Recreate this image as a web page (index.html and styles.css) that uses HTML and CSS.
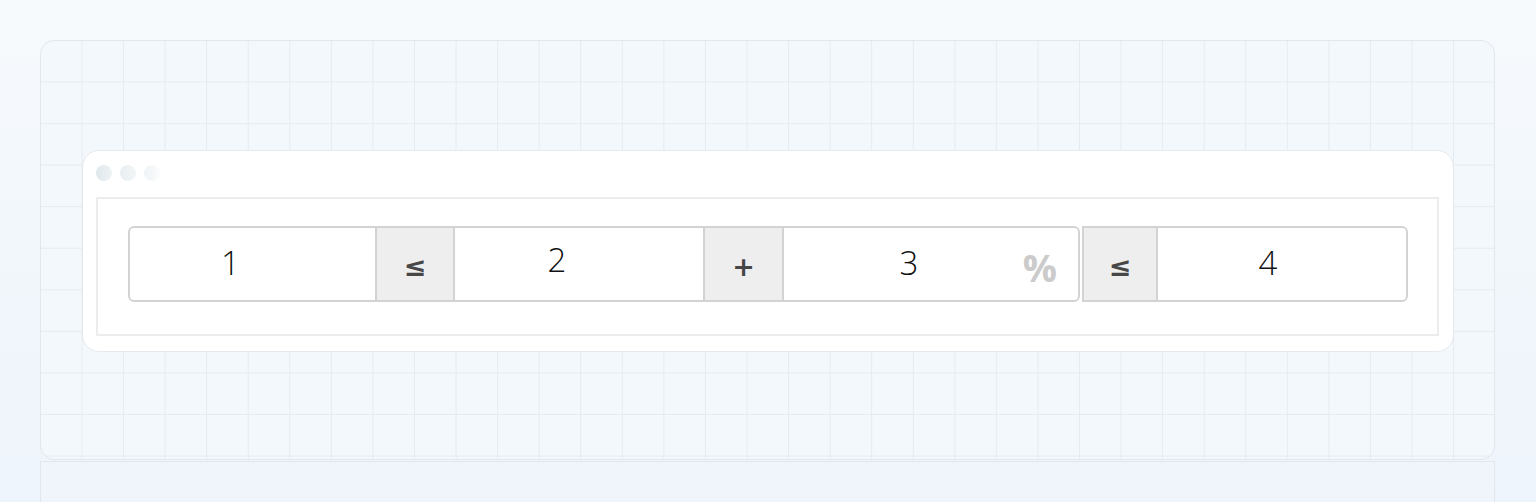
FILE: index.html
```html
<!DOCTYPE html>
<html lang="en">
<head>
<meta charset="utf-8">
<title>Input group</title>
<link rel="stylesheet" href="styles.css">
</head>
<body>
<div class="page">
  <section class="stage">
    <div class="window">
      <div class="dots">
        <span class="dot d1"></span>
        <span class="dot d2"></span>
        <span class="dot d3"></span>
      </div>
      <div class="frame">
        <div class="row">
          <div class="group g1">
            <div class="field f1 first"><span class="val">1</span></div>
            <div class="addon a1">≤</div>
            <div class="field f2"><span class="val v2">2</span></div>
            <div class="addon a2">+</div>
            <div class="field f3 last"><span class="val">3</span><span class="suffix">%</span></div>
          </div>
          <div class="group g2">
            <div class="addon a3">≤</div>
            <div class="field f4 last"><span class="val">4</span></div>
          </div>
        </div>
      </div>
    </div>
  </section>
  <section class="stage next"></section>
</div>
</body>
</html>
```

FILE: styles.css
```css
html, body {
  margin: 0;
  padding: 0;
  height: 100%;
  overflow: hidden;
}

body {
  background: linear-gradient(180deg, #f6fafd 0%, #eef4fb 100%);
  font-family: "Open Sans", "Noto Sans", "DejaVu Sans", sans-serif;
}

.page {
  display: flex;
  flex-direction: column;
  gap: 1px;
  padding: 40px 40px 0 40px;
  width: 1455px;
}

.stage {
  box-sizing: border-box;
  height: 420px;
  border: 1px solid #e1e7ec;
  border-radius: 14px;
  background-color: #f3f8fc;
  background-image:
    linear-gradient(to right, #e5ebf0 1px, transparent 1px),
    linear-gradient(to bottom, #e5ebf0 1px, transparent 1px);
  background-size: 41.57px 41.57px;
  background-position: 40.5px 40.5px;
  display: flex;
  align-items: center;
  padding: 2px 40px 0 41px;
}

.stage.next {
  height: 200px;
  border-radius: 0;
  border-bottom: none;
  background: #eff5fb;
}

.window {
  box-sizing: border-box;
  width: 1372px;
  height: 202px;
  background: #ffffff;
  border: 1px solid #e5e9ed;
  border-radius: 17px;
  padding: 14px 14px 15px 13px;
  display: flex;
  flex-direction: column;
  gap: 16px;
}

.dots {
  display: flex;
  gap: 8px;
}

.dot {
  width: 16px;
  height: 16px;
  border-radius: 50%;
  background: linear-gradient(90deg, #dfe7eb, #eef3f5);
}

.dot.d2 {
  background: linear-gradient(90deg, #e7eef1, #f3f6f7);
}

.dot.d3 {
  background: linear-gradient(90deg, #eff4f6, #fafbfc);
}

.frame {
  box-sizing: border-box;
  flex: 1;
  border: 2px solid #ececec;
  padding: 27px 29px 0 30px;
}

.row {
  display: flex;
  gap: 2px;
  height: 76px;
}

.group {
  display: flex;
  height: 76px;
}

.field, .addon {
  box-sizing: border-box;
  height: 76px;
  border: 2px solid #d3d3d3;
  display: flex;
  align-items: center;
  justify-content: center;
}

.group > * + * {
  border-left: none;
}

.field {
  background: #ffffff;
  padding-right: 44px;
  position: relative;
}

.f1 { width: 249px; }
.f2 { width: 250px; }
.f3 { width: 296px; }
.f4 { width: 250px; padding-right: 28px; }

.first {
  border-radius: 6px 0 0 6px;
}

.last {
  border-radius: 0 6px 6px 0;
}

.val {
  font-size: 33px;
  font-weight: 300;
  color: #111111;
  line-height: 1;
  margin-top: -4px;
}

.val.v2 {
  margin-top: -10px;
}

.suffix {
  position: absolute;
  right: 21px;
  top: 50%;
  transform: translateY(-50%);
  margin-top: 3px;
  font-size: 38px;
  font-weight: 700;
  color: #cbcbcb;
  line-height: 1;
}

.addon {
  background: #eeeeee;
  font-family: "DejaVu Sans", sans-serif;
  font-size: 27px;
  font-weight: 700;
  color: #474747;
  line-height: 1;
  padding-top: 4px;
}

.a1 { width: 78px; }
.a2 { width: 79px; }
.a3 { width: 76px; }
```
